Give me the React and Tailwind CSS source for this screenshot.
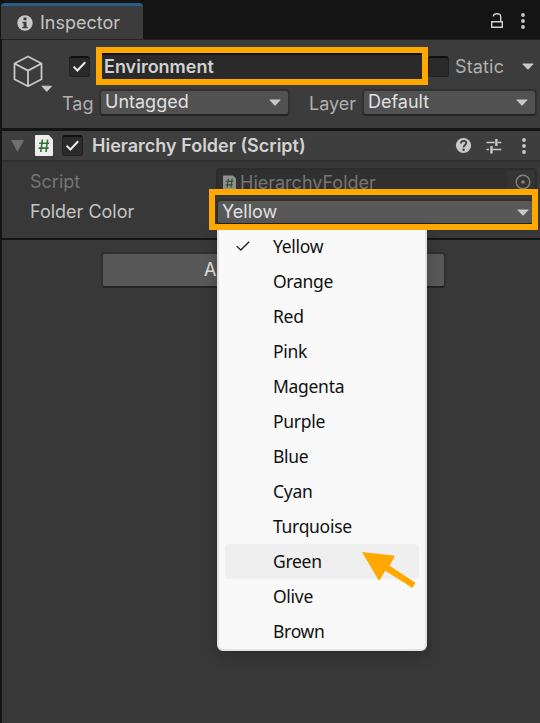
const COLORS = ['Yellow', 'Orange', 'Red', 'Pink', 'Magenta', 'Purple', 'Blue', 'Cyan', 'Turquoise', 'Green', 'Olive', 'Brown'];

function Caret({ className = '' }) {
  return (
    <svg className={`shrink-0 ${className}`} width="12" height="7" viewBox="0 0 12 7" fill="#c8c8c8">
      <path d="M1 .5h10q.7 0 .3.7L6.6 6.2q-.6.6-1.2 0L.7 1.2Q.3.5 1 .5Z" />
    </svg>
  );
}

function Dots({ className = '' }) {
  return (
    <svg className={`shrink-0 ${className}`} width="4" height="16" viewBox="0 0 4 16" fill="#c8c8c8">
      <circle cx="2" cy="2" r="1.9" />
      <circle cx="2" cy="8" r="1.9" />
      <circle cx="2" cy="14" r="1.9" />
    </svg>
  );
}

function Checkbox({ checked, className = '' }) {
  return (
    <div className={`h-[21px] w-[21px] shrink-0 rounded-[3px] border border-t-2 border-[#212121] border-t-[#101010] bg-[#2a2a2a] ${className}`}>
      {checked && (
        <svg width="19" height="18" viewBox="0 0 19 18" fill="none" stroke="#ececec" strokeWidth="2">
          <path d="M3.6 8.6 7.4 12.5 15.2 4.2" />
        </svg>
      )}
    </div>
  );
}

function ScriptIcon({ width, height, className = '' }) {
  return (
    <svg className={`shrink-0 ${className}`} width={width} height={height} viewBox="0 0 18 21">
      <path d="M1 0h12.8L18 4.4V20q0 1-1 1H1q-1 0-1-1V1q0-1 1-1Z" fill="#ededed" />
      <path d="M7.4 4.5 5.8 17M12.6 4.5 11 17M4.2 8.3h10M3.6 13.1h10" fill="none" stroke="#2c742f" strokeWidth="1.6" />
    </svg>
  );
}

function Dropdown({ label, className = '' }) {
  return (
    <div className={`flex h-[27px] shrink-0 items-center justify-between rounded-[4px] border-2 border-[#303030] border-b-[#242424] bg-[#515151] pl-[4px] text-[#e0e0e0] ${className}`}>
      <span className="-mt-px">{label}</span>
      <Caret className="mr-[7px]" />
    </div>
  );
}

export default function App() {
  return (
    <div className="relative h-[723px] w-[540px] overflow-hidden bg-[#141414] font-['Inter',sans-serif] text-[18px] leading-[22px] text-[#c4c4c4]">
      <div className="flex h-[39px] pl-px pt-[3px]">
        <div className="flex h-[36px] w-[142px] items-center rounded-t-[4px] border-t-[3px] border-[#2c5d87] bg-[#3c3c3c] pl-[16px]">
          <svg width="16" height="16" viewBox="0 0 16 16" className="shrink-0">
            <circle cx="8" cy="8" r="7.7" fill="#c8c8c8" />
            <path d="M6.5 2.6h3v2.6h-3zM5.5 6.7h4v5h1.2v1.6H5.3v-1.6h1.3V8.3H5.5z" fill="#3c3c3c" />
          </svg>
          <span className="ml-[7px] text-[18px]">Inspector</span>
        </div>
        <svg className="ml-[347px] mt-[9px] shrink-0" width="14" height="17" viewBox="0 0 14 17" fill="none" stroke="#d0d0d0" strokeWidth="1.4">
          <path d="M1.7 9.7h10.6v5.6H1.7zM3.3 4.6C3.3 2.5 4.6 1.7 7 1.7s3.7.8 3.7 3V9.7" />
        </svg>
        <Dots className="ml-[17px] mt-[10px]" />
      </div>

      <div className="ml-[2px] h-[89px] border-t border-[#242424] bg-[#3c3c3c]">
        <div className="flex">
          <div className="mt-[15px] h-[45px] w-[48px] shrink-0 pl-[10px]">
            <svg width="42" height="40" viewBox="0 0 42 40" fill="none" stroke="#c8c8c8" strokeWidth="1.8" strokeLinejoin="round">
              <path d="M16 1.5 29.5 8.5V24.2L16 31.2 2.5 24.2V8.5ZM2.5 8.5 16 15.6 29.5 8.5M16 15.6v15.6" />
              <path d="M30 31.2h9.5L34.8 36.4Z" fill="#c8c8c8" strokeWidth="1" />
            </svg>
          </div>
          <div className="flex items-start pl-[19px]">
            <Checkbox checked className="mt-[16px]" />
            <div className="ml-[12px] mt-[13px] flex h-[26px] w-[320px] items-center border-t-2 border-[#111] bg-[#2a2a2a] pl-[2px] font-semibold text-[#d2d2d2] text-[18px]">Environment</div>
            <Checkbox className="ml-[6px] mt-[16px]" />
            <span className="ml-[6px] mt-[16px] tracking-[0.15px] text-[#b0b0b0]">Static</span>
            <Caret className="ml-[18px] mt-[23px]" />
          </div>
        </div>
        <div className="-mt-[11px] flex items-center pl-[60px]">
          <span className="w-[37px] pt-[2px] text-[#b0b0b0]">Tag</span>
          <Dropdown label="Untagged" className="w-[191px]" />
          <span className="ml-[19px] w-[53px] pt-[2px] text-[#b0b0b0]">Layer</span>
          <Dropdown label="Default" className="w-[175px]" />
        </div>
      </div>

      <div className="ml-[2px] mt-[3px] flex h-[31px] items-center border-b-2 border-[#303030] bg-[#3e3e3e]">
        <svg className="ml-[9px]" width="13" height="12" viewBox="0 0 13 12" fill="#6f6f6f"><path d="M0 0h13L6.5 12Z" /></svg>
        <ScriptIcon width={18} height={21} className="ml-[11px]" />
        <Checkbox checked className="ml-[9px]" />
        <span className="ml-[9px] w-[370px] font-semibold text-[#d2d2d2]">Hierarchy Folder (Script)</span>
        <svg width="17" height="17" viewBox="0 0 17 17" className="-ml-[7px] shrink-0">
          <circle cx="8.5" cy="8.5" r="7.6" fill="#c8c8c8" />
          <path d="M5.9 6.5C6 4.6 7.1 3.9 8.6 3.9c1.6 0 2.6.8 2.6 2.2 0 1.9-2.5 1.9-2.5 4.2" fill="none" stroke="#3e3e3e" strokeWidth="1.8" />
          <circle cx="8.6" cy="12.8" r="1.2" fill="#3e3e3e" />
        </svg>
        <svg width="16" height="16" viewBox="0 0 16 16" className="ml-[14px] shrink-0" fill="none" stroke="#c8c8c8" strokeWidth="1.5">
          <path d="M.5 4.4h8.2M12 4.4h3.3M.5 11.6h2.4M6.8 11.6h8.5" />
          <path d="M10.4 1v7M5.5 8v7.4" strokeWidth="2.4" />
        </svg>
        <Dots className="ml-[20px]" />
      </div>

      <div className="ml-[2px] h-[76px] bg-[#383838]">
        <div className="flex h-[35px] pl-[28px] pt-[6px]">
          <span className="mt-[3px] w-[186px] text-[#757575]">Script</span>
          <div className="flex h-[27px] w-[321px] items-center rounded-[4px] border-2 border-[#2c2c2c] bg-[#303030] text-[#757575]">
            <ScriptIcon width={13} height={16} className="ml-[5px] mt-[3px] opacity-50" />
            <span className="ml-[4px] mt-[2px]">HierarchyFolder</span>
            <div className="ml-auto flex h-full w-[28px] items-center justify-center bg-[#343434] pl-[3px]">
              <svg width="16" height="16" viewBox="0 0 16 16" fill="none" stroke="#838383" strokeWidth="1.4">
                <circle cx="8" cy="8" r="6.8" />
                <circle cx="8" cy="8" r="1.8" fill="#838383" stroke="none" />
              </svg>
            </div>
          </div>
        </div>
        <div className="flex pl-[28px]">
          <span className="mt-[4px] w-[186px]">Folder Color</span>
          <div className="mt-[2px] flex h-[26px] w-[317px] items-center justify-between rounded-[4px] border-2 border-r-0 border-[#303030] border-b-[#242424] bg-[#585858] pl-[4px] text-[#e0e0e0]">
            <span className="-mt-px">Yellow</span>
            <Caret className="mr-[4px]" />
          </div>
        </div>
      </div>

      <div className="ml-[2px] mt-[2px] h-[483px] bg-[#383838] pl-[99px] pt-[12px]">
        <div className="flex h-[36px] w-[345px] items-center rounded-[4px] border-2 border-[#303030] border-b-[#242424] bg-[#585858] pl-[101px] text-[#e4e4e4]">A</div>
      </div>

      <div className="absolute left-[96px] top-[47px] h-[38px] w-[332px] border-[6px] border-[#ffa800]" />

      <div className="absolute left-[217px] top-[227px] h-[424px] w-[210px] rounded-b-[6px] border-2 border-[#e2e2e2] bg-[#f9f9f9] px-[6px] font-['Noto_Sans','Open_Sans',sans-serif] text-[17.5px] leading-[35px] tracking-[-0.3px] text-[#111] shadow-[0_4px_14px_rgba(0,0,0,0.25)]">
        {COLORS.map((name) => (
          <div key={name} className={`flex h-[35px] items-center rounded-[4px] ${name === 'Green' ? 'bg-[#efefef]' : ''}`}>
            <span className="w-[48px] pl-[11px]">
              {name === 'Yellow' && (
                <svg width="14" height="11" viewBox="0 0 14 11" fill="none" stroke="#1c1c1c" strokeWidth="1.3"><path d="M.7 5.1 4.8 9 13.2 .8" /></svg>
              )}
            </span>
            <span>{name}</span>
          </div>
        ))}
      </div>

      <div className="absolute left-[209px] top-[189px] h-[41px] w-[329px] border-[6px] border-[#ffa800]" />

      <svg className="absolute left-[360px] top-[550px]" width="58" height="40" viewBox="0 0 58 40" fill="#ffa800">
        <path d="M2 2 35 5.8 29.5 15.8 55.5 32.7 52.5 38 25.3 20.8 19 31Z" />
      </svg>
    </div>
  );
}
